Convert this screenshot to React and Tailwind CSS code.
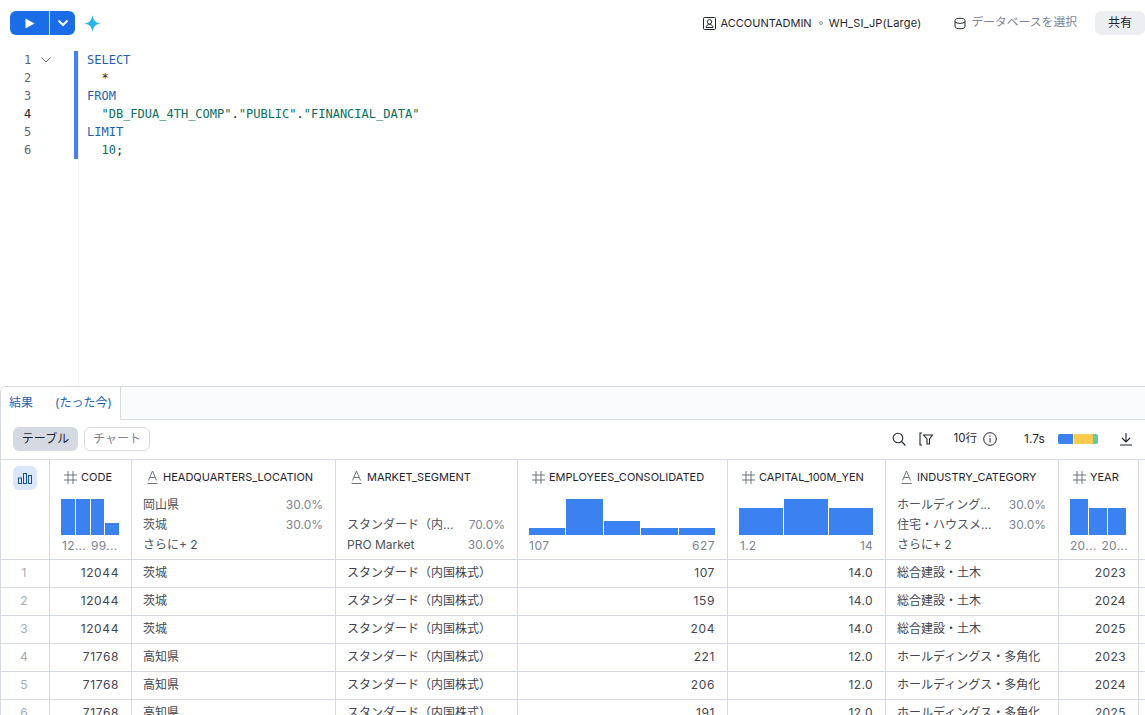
import React from "react";

function Hash() {
  return (
    <svg width="15" height="15" viewBox="0 0 15 15" fill="none" stroke="#6b7280" strokeWidth="1" className="shrink-0">
      <path d="M5 1v13M10 1v13M1 5h13M1 10h13" />
    </svg>
  );
}
function TypeA() {
  return (
    <svg width="11" height="15" viewBox="0 0 11 15" fill="none" stroke="#6b7280" strokeWidth="1" className="shrink-0">
      <path d="M1.500 10.500 5.500 1l4 9.500M3 7.500h5M0.500 13.500h10" />
    </svg>
  );
}
function Hist({ bars, cls }) {
  return (
    <div className={"flex items-end gap-px h-9 " + cls}>
      {bars.map((h, i) => (
        <div key={i} className="flex-1 bg-[#3b82f0]" style={{ height: h }} />
      ))}
    </div>
  );
}
function Stat({ a, b, top }) {
  return (
    <div className={"flex justify-between h-5 items-center " + (top || "")}>
      <span className="text-[#4b5260]">{a}</span>
      <span className="text-[#7b8394]">{b}</span>
    </div>
  );
}
function Head({ icon, label, pl }) {
  return (
    <div className={"flex items-center h-[15px] text-[11px] text-[#1f2530] " + (icon === "h" ? "gap-[3px] " : "gap-[5px] ") + pl}>
      {icon === "h" ? <Hash /> : <TypeA />}
      <span>{label}</span>
    </div>
  );
}

const rows = [
  ["1", "12044", "茨城", "107", "14.0", "総合建設・土木", "2023"],
  ["2", "12044", "茨城", "159", "14.0", "総合建設・土木", "2024"],
  ["3", "12044", "茨城", "204", "14.0", "総合建設・土木", "2025"],
  ["4", "71768", "高知県", "221", "12.0", "ホールディングス・多角化", "2023"],
  ["5", "71768", "高知県", "206", "12.0", "ホールディングス・多角化", "2024"],
  ["6", "71768", "高知県", "191", "12.0", "ホールディングス・多角化", "2025"],
];

const grid = "grid grid-cols-[49px_82px_204px_182px_210px_158px_173px_80px_8px]";
const cell = "border-r border-[#d5d9e2] h-full";

export default function App() {
  return (
    <div className="w-[1145px] h-[715px] overflow-hidden bg-white flex flex-col text-[12px] font-['Inter','Noto_Sans_CJK_JP',sans-serif]">
      <div className="h-[51px] shrink-0 flex items-center pl-[10px] pb-[5px]">
        <div className="flex h-6 w-[65px] rounded-[6px] overflow-hidden bg-[#1a6ce7]">
          <div className="w-[40px] flex items-center justify-center border-r border-white/80">
            <svg width="11" height="11" viewBox="0 0 11 11"><path d="M1.500.500 10.500 5.500 1.500 10.500z" fill="white" /></svg>
          </div>
          <div className="flex-1 flex items-center justify-center">
            <svg width="12" height="8" viewBox="0 0 12 8" fill="none" stroke="white" strokeWidth="2"><path d="M1.500 1.500 6 6l4.500-4.500" /></svg>
          </div>
        </div>
        <svg width="17" height="17" viewBox="0 0 17 17" className="ml-[9px]">
          <path d="M8.500 0C9.300 5 11 7.500 16.500 8.500 11 9.500 9.300 12 8.500 17 7.700 12 6 9.500.500 8.500 6 7.500 7.700 5 8.500 0z" fill="#29b5e8" />
        </svg>
        <div className="ml-auto flex items-center text-[11px] text-[#1f2530]">
          <svg width="13" height="13" viewBox="0 0 13 13" fill="none" stroke="#1f2530" strokeWidth="1" className="mr-[5px]">
            <rect x="0.500" y="0.500" width="12" height="12" rx="1" />
            <circle cx="6.500" cy="4.800" r="2.200" />
            <path d="M3 10.500c0-4 7-4 7 0z" />
          </svg>
          <span>ACCOUNTADMIN</span>
          <span className="ml-[7px] mr-[6px] w-1 h-1 rounded-full border border-[#8b92a0]" />
          <span className="tracking-[0.2px]">WH_SI_JP(Large)</span>
          <svg width="12" height="13" viewBox="0 0 12 13" fill="none" stroke="#1f2530" strokeWidth="1" className="ml-[33px] mr-[5px]">
            <path d="M1 3.500C1 .500 11 .500 11 3.500v6c0 3-10 3-10 0zM1 5c1.500 1.800 8.500 1.800 10 0" />
          </svg>
          <span className="text-[#7b8394] text-[11.8px]">データベースを選択</span>
          <div className="ml-[18px] w-[50px] h-6 rounded-[6px] bg-[#eceef2] flex items-center justify-center text-[#1f2530] text-[12px]">共有</div>
        </div>
      </div>

      <div className="h-[335px] shrink-0 flex font-['DejaVu_Sans_Mono',monospace] text-[12px] leading-[18px]">
        <div className="w-[74px] shrink-0 relative text-[#5f6673]">
          {[1, 2, 3, 4, 5, 6].map((n) => (
            <div key={n} className={"h-[18px] pl-6 " + (n === 4 ? "text-[#1f2530]" : "")}>{n}</div>
          ))}
          <svg width="10" height="6" viewBox="0 0 10 6" fill="none" stroke="#6b7280" strokeWidth="1" className="absolute left-[41px] top-[6px]"><path d="M.500.500 5 5 9.500.500" /></svg>
        </div>
        <div className="flex-1 border-l border-[#eef0f3] relative ml-[4px]">
          <div className="absolute -left-[5px] top-0 w-1 h-[108px] bg-[#4a7df0]" />
          <pre className="pl-2 font-['DejaVu_Sans_Mono',monospace] text-[#0a6e5c]">
            <div className="text-[#1e5fb4]">SELECT</div>
            <div className="text-[#1f2530]">  *</div>
            <div className="text-[#1e5fb4]">FROM</div>
            <div>  "DB_FDUA_4TH_COMP"<span className="text-[#1f2530]">.</span>"PUBLIC"<span className="text-[#1f2530]">.</span>"FINANCIAL_DATA"</div>
            <div className="text-[#1e5fb4]">LIMIT</div>
            <div>  10<span className="text-[#1f2530]">;</span></div>
          </pre>
        </div>
      </div>

      <div className="flex-1 min-h-0 overflow-hidden border-t border-l border-[#d5d9e2] rounded-tl-[6px]">
        <div className="h-[33px] flex border-b border-[#d5d9e2] bg-[#fafbfc]">
          <div className="w-[120px] h-[33px] bg-white border-r border-[#d5d9e2] flex items-center pl-2 pb-[2px] text-[#1e5fb4] gap-[22px]">
            <span>結果</span><span>(たった今)</span>
          </div>
        </div>
        <div className="h-[40px] flex items-center pl-3 pr-[12px] pb-px border-b border-[#d5d9e2]">
          <div className="w-[65px] h-6 rounded-[6px] bg-[#d5d9e2] flex items-center justify-center text-[#1f2530]">テーブル</div>
          <div className="ml-[6px] w-[66px] h-6 rounded-[6px] border border-[#d5d9e2] flex items-center justify-center text-[#7b8394]">チャート</div>
          <div className="ml-auto flex items-center text-[#1f2530]">
            <svg width="14" height="14" viewBox="0 0 14 14" fill="none" stroke="#1f2530" strokeWidth="1.100"><circle cx="6" cy="6" r="4.800" /><path d="M9.500 9.500 13.500 13.500" /></svg>
            <svg width="15" height="14" viewBox="0 0 15 14" fill="none" stroke="#1f2530" strokeWidth="1.100" className="ml-[13px]"><path d="M3 1H1v12h2M4.500 3h9L10.500 7v5h-2.500V7z" /></svg>
            <span className="ml-[20px] text-[11.5px]">10行</span>
            <svg width="14" height="14" viewBox="0 0 14 14" fill="none" stroke="#1f2530" strokeWidth="1" className="ml-[6px]"><circle cx="7" cy="7" r="6.300" /><path d="M7 6v4.500M7 3.500v1.300" /></svg>
            <span className="ml-[27px] w-[22px] text-[12px]">1.7s</span>
            <div className="ml-[12px] w-[40px] h-[10px] rounded-[2px] overflow-hidden flex">
              <div className="w-[15px] bg-[#3b82f0]" />
              <div className="w-[19px] ml-px bg-[#fbc94f]" />
              <div className="flex-1 bg-[#5bcf9f]" />
            </div>
            <svg width="14" height="14" viewBox="0 0 14 14" fill="none" stroke="#1f2530" strokeWidth="1.100" className="ml-[21px]"><path d="M7 1v8.500M3 6l4 4 4-4M1 13h12" /></svg>
          </div>
        </div>

        <div className={grid + " h-[100px] border-b border-[#d5d9e2]"}>
          <div className={cell + " pl-3 pt-[6px]"}>
            <div className="w-6 h-6 rounded-[6px] bg-[#dbe7fd] flex items-center justify-center">
              <svg width="14" height="11" viewBox="0 0 14 11" fill="none" stroke="#1a4fa8" strokeWidth="1"><rect x="0.500" y="5" width="3" height="5.500" /><rect x="5.500" y="0.500" width="3" height="10" /><rect x="10.500" y="2.500" width="3" height="8" /></svg>
            </div>
          </div>
          <div className={cell + " pt-[10px]"}>
            <Head icon="h" label="CODE" pl="pl-[13px]" />
            <Hist bars={[36, 36, 36, 12]} cls="ml-[11px] mr-3 mt-[14px]" />
            <div className="flex gap-[5px] pl-[12px] h-[20px] mt-px items-center text-[#7b8394] tracking-[0.3px]"><span>12...</span><span>99...</span></div>
          </div>
          <div className={cell + " pt-[10px] pl-[11px] pr-3"}>
            <Head icon="a" label="HEADQUARTERS_LOCATION" pl="pl-[4px]" />
            <Stat a="岡山県" b="30.0%" top="mt-[10px]" />
            <Stat a="茨城" b="30.0%" />
            <div className="h-5 flex items-center text-[#4b5260]">さらに+ 2</div>
          </div>
          <div className={cell + " pt-[10px] pl-[11px] pr-3"}>
            <Head icon="a" label="MARKET_SEGMENT" pl="pl-[4px]" />
            <Stat a="スタンダード（内..." b="70.0%" top="mt-[30px]" />
            <Stat a="PRO Market" b="30.0%" />
          </div>
          <div className={cell + " pt-[10px]"}>
            <Head icon="h" label="EMPLOYEES_CONSOLIDATED" pl="pl-[13px]" />
            <Hist bars={[7, 36, 14, 7, 7]} cls="ml-[11px] mr-3 mt-[14px]" />
            <div className="flex justify-between pl-[11px] pr-[12px] h-[20px] mt-px items-center text-[#7b8394] tracking-[0.5px]"><span>107</span><span>627</span></div>
          </div>
          <div className={cell + " pt-[10px]"}>
            <Head icon="h" label="CAPITAL_100M_YEN" pl="pl-[13px]" />
            <Hist bars={[27, 36, 27]} cls="ml-[11px] mr-3 mt-[14px]" />
            <div className="flex justify-between pl-[12px] pr-[12px] h-[20px] mt-px items-center text-[#7b8394] tracking-[0.2px]"><span>1.2</span><span>14</span></div>
          </div>
          <div className={cell + " pt-[10px] pl-[11px] pr-3"}>
            <Head icon="a" label="INDUSTRY_CATEGORY" pl="pl-[4px]" />
            <Stat a="ホールディング..." b="30.0%" top="mt-[10px]" />
            <Stat a="住宅・ハウスメ..." b="30.0%" />
            <div className="h-5 flex items-center text-[#4b5260]">さらに+ 2</div>
          </div>
          <div className={cell + " pt-[10px]"}>
            <Head icon="h" label="YEAR" pl="pl-[13px]" />
            <Hist bars={[36, 27, 27]} cls="ml-[11px] mr-3 mt-[14px]" />
            <div className="flex gap-[5px] pl-[11px] h-[20px] mt-px items-center text-[#7b8394] tracking-[0.3px]"><span>20...</span><span>20...</span></div>
          </div>
          <div />
        </div>

        {rows.map((r) => (
          <div key={r[0]} className={grid + " h-[28px] border-b border-[#d5d9e2] text-[#3f4552] leading-[25px]"}>
            <div className={cell + " text-center text-[#a3aab6] pr-[2px]"}>{r[0]}</div>
            <div className={cell + " text-right pr-3 tracking-[0.6px]"}>{r[1]}</div>
            <div className={cell + " pl-[11px]"}>{r[2]}</div>
            <div className={cell + " pl-[11px]"}>スタンダード（内国株式）</div>
            <div className={cell + " text-right pr-3 tracking-[0.6px]"}>{r[3]}</div>
            <div className={cell + " text-right pr-3 tracking-[0.4px]"}>{r[4]}</div>
            <div className={cell + " pl-[11px]"}>{r[5]}</div>
            <div className={cell + " text-right pr-3 tracking-[0.4px]"}>{r[6]}</div>
            <div />
          </div>
        ))}
      </div>
    </div>
  );
}
